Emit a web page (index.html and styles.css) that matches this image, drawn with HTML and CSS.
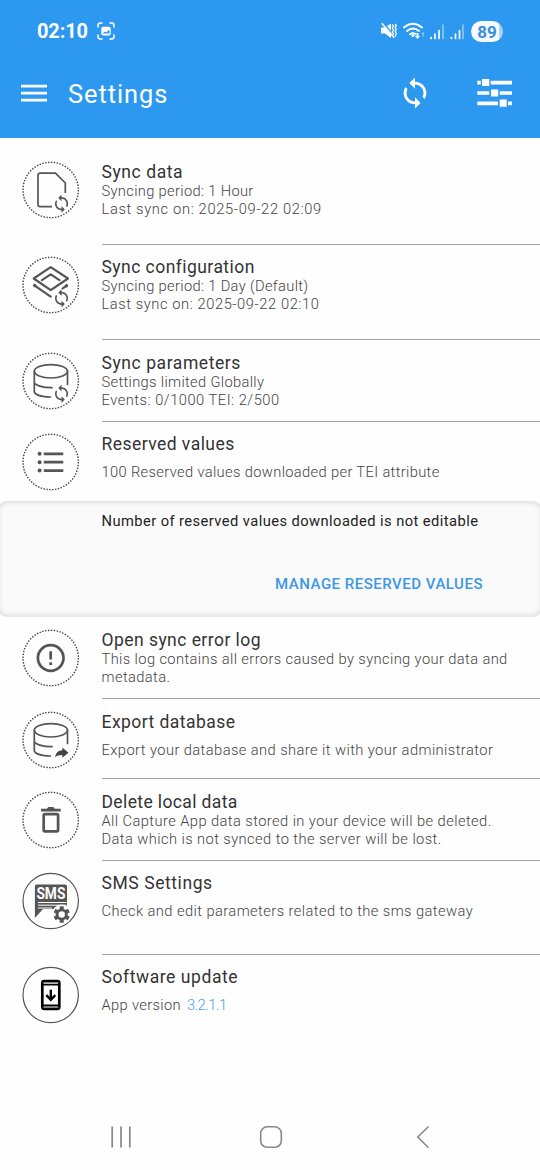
FILE: index.html
```html
<!DOCTYPE html>
<html lang="en">
<head>
<meta charset="utf-8">
<title>Settings</title>
<link rel="stylesheet" href="styles.css">
</head>
<body>
<svg class="defs" width="0" height="0" aria-hidden="true">
  <symbol id="sync" viewBox="0 0 24 24"><path d="M12 4V1L8 5l4 4V6c3.31 0 6 2.69 6 6 0 1.01-.25 1.97-.7 2.8l1.46 1.46C19.54 15.03 20 13.57 20 12c0-4.42-3.58-8-8-8zm0 14c-3.31 0-6-2.69-6-6 0-1.01.25-1.97.7-2.8L5.24 7.74C4.46 8.97 4 10.43 4 12c0 4.42 3.58 8 8 8v3l4-4-4-4v3z"/></symbol>
  <symbol id="ring" viewBox="0 0 58 58"><circle cx="28.7" cy="29" r="27.7" fill="none" stroke="#444" stroke-width="1.4" stroke-dasharray="1.45 1.45"/></symbol>
  <symbol id="ring-solid" viewBox="0 0 58 58"><circle cx="28.7" cy="29" r="27.7" fill="none" stroke="#555" stroke-width="1.2"/></symbol>
  <symbol id="db" viewBox="0 0 58 58"><g fill="none" stroke="#555" stroke-width="1.7" stroke-linecap="round"><ellipse cx="28.9" cy="19.3" rx="16.6" ry="6.7"/><path d="M12.3 19.3V39.5C12.3 42.5 19 44.7 28.5 45M12.3 30.2C13 33.2 20.5 35.8 30 35.7M45.5 19.3V32.5"/></g></symbol>
</svg>
<div class="screen">
  <header class="header">
    <div class="status">
      <span class="clock">02:10</span>
      <svg class="capture" width="18" height="18" viewBox="0 0 18 18"><path d="M1 5V3.500Q1 1 3.500 1H5M13 1h1.500Q17 1 17 3.500V5M17 13v1.500Q17 17 14.500 17H13M5 17H3.500Q1 17 1 14.500V13" fill="none" stroke="#fff" stroke-width="1.500" stroke-linecap="round"/><rect x="4.300" y="4.800" width="9.400" height="8.600" rx="2" fill="#fff"/><path d="M5.500 11.500l2.500-2 1.500 1 2-2.500 1 1v2.500z" fill="#2c98f0"/></svg>
      <svg class="indicators" width="84" height="20" viewBox="0 0 84 20" fill="#fff">
        <path d="M1.500 6.500h3.500L11 2.500v14.500l-6-4.500H1.500q-.5 0-.5-1V7.500q0-1 .5-1z"/>
        <path d="M2.800 1.500l12.500 14.500" stroke="#2c98f0" stroke-width="1.500"/><path d="M1.800 2.200l12.500 14.500" stroke="#fff" stroke-width="1.400"/>
        <path d="M12.300 3.500l1.200 1.500-1.200 2 1.200 2-1.200 2 1.200 2-1.200 2M15.200 3l1.100 1.500-1.100 2 1.100 2-1.100 2 1.100 2-1.100 3" fill="none" stroke="#fff" stroke-width="1.300"/>
        <g fill="none" stroke="#fff" stroke-width="1.900" stroke-linecap="round"><path d="M24 6.500q9-7.500 18 0M27 10q6-5 12 0M30 13.300q3-2.200 5.500-.3"/></g>
        <circle cx="33" cy="14.500" r="1.500"/><path d="M36.500 12h2v3h1.600l-2.600 3-2.600-3h1.600z"/><path d="M43 16v-4m-1 1l1-1.500 1 1.500" stroke="#9dcff8" fill="none"/>
        <g stroke="#fff" stroke-width="1.700" stroke-linecap="round"><path d="M51 16.500v1M55 13v4.500M59 9.500v8M71.500 16.500v1M75.500 13v4.500M79.500 9.500v8"/><path d="M63 4v13.500M83 4v13.500" opacity=".45"/></g>
      </svg>
      <span class="battery">89</span>
    </div>
    <div class="toolbar">
      <svg width="26" height="18" viewBox="0 0 26 18"><path d="M0 2.200h26M0 9.200h26M0 16.200h26" stroke="#fff" stroke-width="2.800"/></svg>
      <h1 class="page-title">Settings</h1>
      <svg class="sync-action" width="34" height="34" fill="#fff"><use href="#sync"/></svg>
      <svg class="tune" width="36" height="28" viewBox="0 0 36 28" fill="#fff"><path d="M.3 1.800h3.500v3.600H.3zM5 0h7.300v7H5zM13.700 1.800H35v3.600H13.700zM.3 12.200h12v3.600H.3zM14 10.400h7.200v7.200H14zM22.700 12.200H35v3.600H22.700zM.3 22.600H21v3.600H.3zM22.700 20.600h7v7.200h-7zM31 22.600h4v3.600h-4z"/></svg>
    </div>
  </header>

  <main class="list">
    <section class="row first">
      <svg class="icon" viewBox="0 0 58 58"><use href="#ring"/><path d="M30 45.700H18.200Q16 45.700 16 43.500V14.300Q16 12.100 18.200 12.100H33.500L43.300 22V32" fill="none" stroke="#555" stroke-width="1.700"/><use href="#sync" x="29.700" y="32.800" width="19.700" height="19.700" fill="#555"/></svg>
      <div class="body"><h2 class="title wide">Sync data</h2><p class="sub"><span>Syncing period: 1 Hour</span><span class="ls-6">Last sync on: 2025-09-22 02:09</span></p></div>
    </section>
    <section class="row tall">
      <svg class="icon" viewBox="0 0 58 58"><use href="#ring"/><g fill="none" stroke="#555" stroke-width="2.200" stroke-linecap="round" stroke-linejoin="round"><path d="M28.700 11.200L46 22.500 28.700 34.200 11.700 22.500zM19.900 24.200l8.800-5.800 8.800 5.800M12.700 29.700l16 11M44.200 30l-3.500 2.300"/></g><circle cx="12.700" cy="29.500" r="1.700" fill="#555"/><circle cx="44.500" cy="29.700" r="1.700" fill="#555"/><use href="#sync" x="29.700" y="32.500" width="19.700" height="19.700" fill="#555"/></svg>
      <div class="body"><h2 class="title">Sync configuration</h2><p class="sub"><span>Syncing period: 1 Day (Default)</span><span class="ls-5">Last sync on: 2025-09-22 02:10</span></p></div>
    </section>
    <section class="row low">
      <svg class="icon" viewBox="0 0 58 58"><use href="#ring"/><use href="#db"/><use href="#sync" x="29.700" y="32" width="19.700" height="19.700" fill="#555"/></svg>
      <div class="body"><h2 class="title wide">Sync parameters</h2><p class="sub"><span>Settings limited Globally</span><span class="ls-4">Events: 0/1000 TEI: 2/500</span></p></div>
    </section>
    <section class="row open">
      <svg class="icon" viewBox="0 0 58 58"><use href="#ring"/><g fill="#555"><circle cx="17.600" cy="20.800" r="2"/><circle cx="17.600" cy="29.200" r="2"/><circle cx="17.600" cy="37.600" r="2"/></g><path d="M21.800 20.800h19.500M21.800 29.200h19.500M21.800 37.600h19.500" stroke="#555" stroke-width="2.700"/></svg>
      <div class="body"><h2 class="title">Reserved values</h2><p class="sub"><span class="ls-1">100 Reserved values downloaded per TEI attribute</span></p></div>
    </section>
    <div class="panel">
      <p class="note">Number of reserved values downloaded is not editable</p>
      <a class="manage">MANAGE RESERVED VALUES</a>
    </div>
    <section class="row low">
      <svg class="icon" viewBox="0 0 58 58"><use href="#ring"/><circle cx="28.700" cy="29" r="12.800" fill="none" stroke="#555" stroke-width="2.700"/><path d="M28.700 22.200v8.400M28.700 33.300V36" stroke="#555" stroke-width="2.700"/></svg>
      <div class="body"><h2 class="title">Open sync error log</h2><p class="sub"><span class="ls-2">This log contains all errors caused by syncing your data and</span><span class="ls-2">metadata.</span></p></div>
    </section>
    <section class="row short">
      <svg class="icon" viewBox="0 0 58 58"><use href="#ring"/><use href="#db"/><path d="M33 46.300C34 41.500 36.500 39.300 40.300 39.200V36.500L46.500 41.700 40.300 46.700V44C37 44 35 44.700 33 46.300z" fill="#444"/></svg>
      <div class="body"><h2 class="title">Export database</h2><p class="sub"><span class="ls-3">Export your database and share it with your administrator</span></p></div>
    </section>
    <section class="row low">
      <svg class="icon" viewBox="0 0 58 58"><use href="#ring"/><path d="M19 17.800h5.800l1.500-1.900h5l1.500 1.900h5.900v2.600H19z" fill="#555"/><rect x="21.700" y="23.100" width="14.400" height="17.300" rx="1.300" fill="none" stroke="#555" stroke-width="2.700"/></svg>
      <div class="body"><h2 class="title narrow">Delete local data</h2><p class="sub"><span class="ls-3">All Capture App data stored in your device will be deleted.</span><span class="ls-3">Data which is not synced to the server will be lost.</span></p></div>
    </section>
    <section class="row sms">
      <svg class="icon" viewBox="0 0 58 58"><use href="#ring-solid"/><path d="M14.700 12.400H43Q45 12.400 45 14.400V37H21L12.900 46V14.400Q12.900 12.400 14.700 12.400z" fill="#555"/><text class="sms-label" x="28.900" y="27.300" text-anchor="middle" textLength="29" lengthAdjust="spacingAndGlyphs">SMS</text><path d="M16 30.500h28.500M16 33.200h28.500M16 36h14" stroke="#fff" stroke-width="1"/><circle cx="39.700" cy="42.500" r="10" fill="#fff"/><g stroke="#555" stroke-width="4"><path d="M39.700 34.300v16.400M32.600 38.400l14.200 8.200M32.600 46.600l14.200-8.200"/></g><circle cx="39.700" cy="42.500" r="6" fill="#555"/><circle cx="39.700" cy="42.500" r="3.200" fill="#fff"/></svg>
      <div class="body"><h2 class="title wide">SMS Settings</h2><p class="sub"><span class="ls-3">Check and edit parameters related to the sms gateway</span></p></div>
    </section>
    <section class="row last">
      <svg class="icon" viewBox="0 0 58 58"><use href="#ring-solid"/><rect x="20.300" y="15.100" width="17" height="27.800" rx="1.800" fill="none" stroke="#000" stroke-width="2.700"/><path d="M20 18.600h18M20 39.500h18" stroke="#000" stroke-width="1.900"/><path d="M20.500 16.600h16.500M20.500 41.600h16.500" stroke="#888" stroke-width=".6"/><path d="M28.800 23.800v9.500M24.300 29.200l4.500 4.600 4.500-4.600" fill="none" stroke="#000" stroke-width="2.400"/></svg>
      <div class="body"><h2 class="title wide">Software update</h2><p class="sub"><span class="ls-1">App version <b class="version">3.2.1.1</b></span></p></div>
    </section>
  </main>

  <nav class="nav">
    <svg width="22" height="24" viewBox="0 0 22 24"><path d="M2.200 1.500v21M11 1.500v21M19.800 1.500v21" stroke="#888" stroke-width="1.700"/></svg>
    <svg class="home" width="24" height="24" viewBox="0 0 24 24"><rect x="1.700" y="1.800" width="20.600" height="20.500" rx="6.500" fill="none" stroke="#888" stroke-width="1.600"/></svg>
    <svg width="14" height="24" viewBox="0 0 14 24"><path d="M12.500 1.500L1.800 12l10.700 10.700" fill="none" stroke="#888" stroke-width="1.600"/></svg>
  </nav>
</div>
</body>
</html>
```
FILE: styles.css
```css
* { box-sizing: border-box; margin: 0; padding: 0; }
body { background: #fefefe; font-family: Roboto, "Liberation Sans", sans-serif; }
svg { display: block; flex: none; }
.defs { position: absolute; }
.screen { width: 540px; height: 1170px; display: flex; flex-direction: column; overflow: hidden; }

.header { height: 138px; background: #2c98f0; color: #fff; }
.status { display: flex; align-items: center; height: 62px; padding-left: 37px; }
.clock { width: 60px; font-size: 20px; font-weight: 700; letter-spacing: -.15px; }
.indicators { margin: 0 7px 0 265px; }
.battery { width: 32px; height: 21px; border-radius: 11px; background: linear-gradient(90deg, #f4faff 89%, #a9d4f8 89%); color: #3b8fdb; font-size: 17px; line-height: 22px; font-weight: 700; text-align: center; }
.toolbar { display: flex; align-items: center; height: 62px; padding-left: 21px; }
.page-title { width: 330px; padding: 1px 0 0 21px; font-size: 25.4px; line-height: 30px; font-weight: 400; letter-spacing: .95px; }
.sync-action { margin: 0 45px 0 21px; }

.row { display: flex; height: 82px; padding: 11px 0 0 22px; }
.row.low { padding-top: 11.6px; }
.row.first { height: 107px; padding-top: 22.6px; }
.row.tall { height: 95px; }
.row.open { height: 79px; }
.row.short { height: 80px; padding-top: 11.6px; }
.row.sms { height: 94px; }
.icon { width: 58px; height: 58px; margin-right: 21.5px; }
.body { flex: 1; align-self: stretch; border-bottom: 1px solid #a2a2a2; }
.open .body, .last .body { border-bottom: 0; }
.title { height: 21px; color: #333; font-size: 17.5px; line-height: 22px; font-weight: 400; white-space: nowrap; letter-spacing: .45px; }
.title.wide { letter-spacing: .57px; }
.title.narrow { letter-spacing: .38px; }
.sub { height: 36px; display: flex; flex-direction: column; justify-content: center; color: #444; font-size: 14.7px; line-height: 18px; font-weight: 300; letter-spacing: .33px; white-space: nowrap; }
.ls-1 { letter-spacing: .35px; }
.ls-2 { letter-spacing: .385px; }
.ls-3 { letter-spacing: .42px; }
.ls-4 { letter-spacing: .5px; }
.ls-5 { letter-spacing: .57px; }
.ls-6 { letter-spacing: .65px; }
.version { margin-left: 2px; color: #48a0ea; font-weight: 300; letter-spacing: -.5px; }
.sms-label { fill: #fff; font: 700 16px Roboto, sans-serif; }

.panel { height: 116px; margin: 0 -3px; padding: 11px 60px 0 104.500px; border-radius: 11px; background: #fafafa; box-shadow: inset 0 0 4px 2px #dfdfdf; }
.note { color: #222; font-size: 14.7px; line-height: 18px; letter-spacing: .435px; white-space: nowrap; }
.manage { display: block; margin-top: 45px; color: #3c97e4; font-size: 15px; line-height: 18px; font-weight: 500; text-align: right; letter-spacing: .5px; }

.nav { display: flex; justify-content: space-between; margin-top: auto; padding: 0 110px 21.500px 109.500px; }
.home { margin-right: 5px; }
```
